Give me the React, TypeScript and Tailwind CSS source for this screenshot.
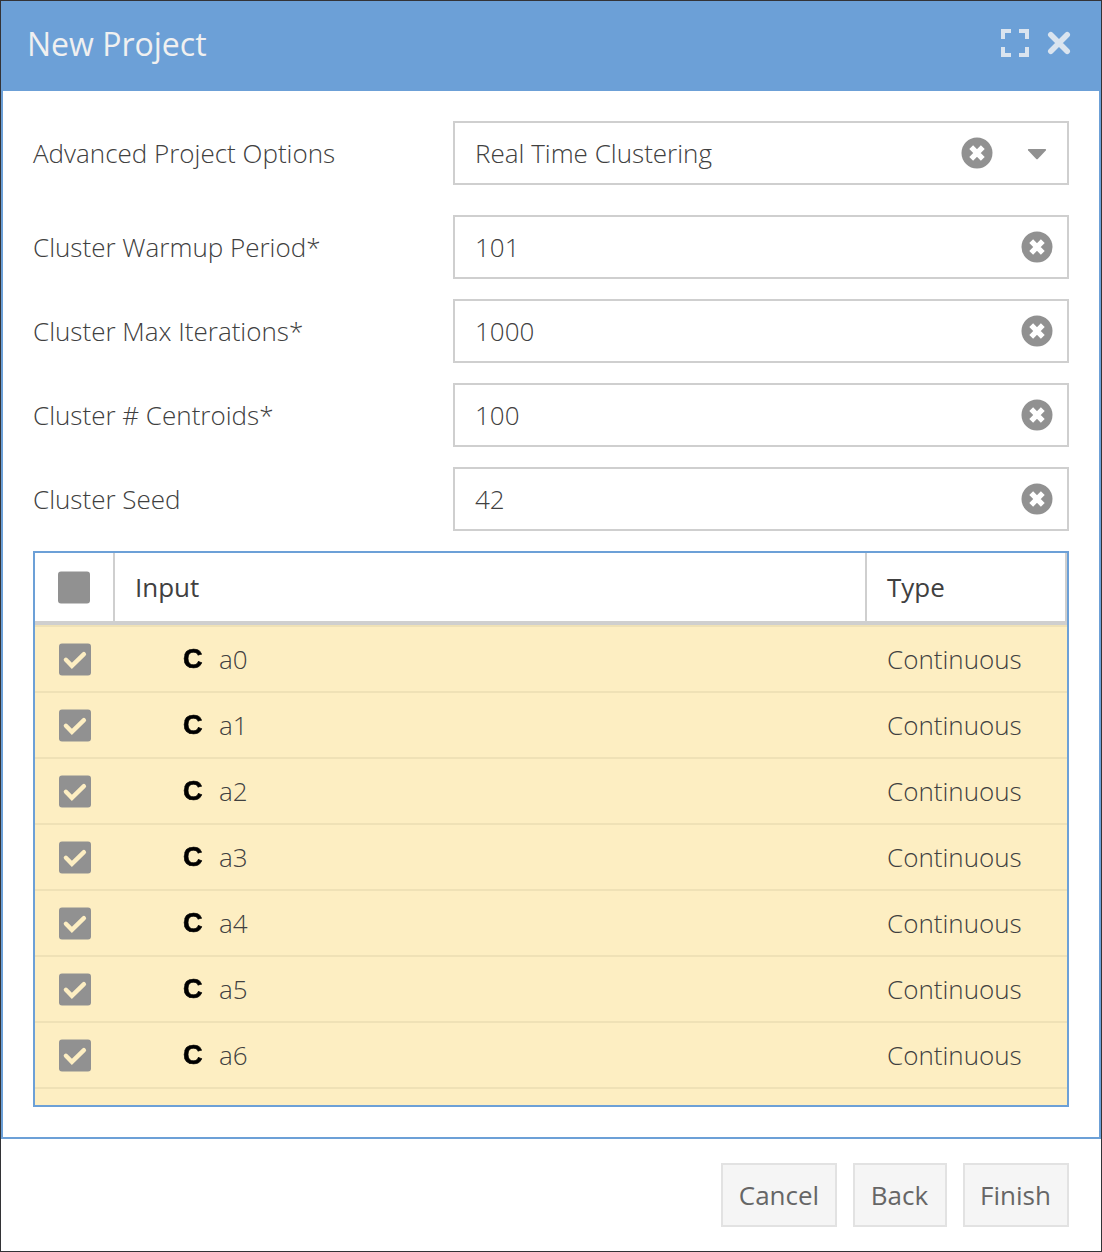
import React from "react";

const fields = [
  { label: "Cluster Warmup Period*", value: "101" },
  { label: "Cluster Max Iterations*", value: "1000" },
  { label: "Cluster # Centroids*", value: "100" },
  { label: "Cluster Seed", value: "42" },
];

const inputs = ["a0", "a1", "a2", "a3", "a4", "a5", "a6"];

function ClearIcon() {
  return (
    <svg width="32" height="32" viewBox="0 0 32 32" className="shrink-0">
      <circle cx="16" cy="16" r="15.5" fill="#919191" />
      <path d="M10.2 10.2 L21.8 21.8 M21.8 10.2 L10.2 21.8" stroke="#fff" strokeWidth="5.4" fill="none" />
    </svg>
  );
}

function Check({ checked }: { checked: boolean }) {
  return (
    <svg width="32" height="33" viewBox="0 0 32 33" className="block">
      <rect x="0" y="0.5" width="32" height="32" rx="3" fill="#919191" />
      {checked && (
        <path d="M6.9 16.8 L12.9 22.8 L24.9 11.2" stroke="#fdeec2" strokeWidth="4.4" strokeLinecap="round" fill="none" strokeLinejoin="miter" />
      )}
    </svg>
  );
}

function Field({ label, value, select = false }: { label: string; value: string; select?: boolean }) {
  return (
    <div className="flex h-16 items-center">
      <label className="w-[420px] font-light">{label}</label>
      <div className="flex h-16 flex-1 items-center border-2 border-[#cfcfcf] pl-5 pr-[14px]">
        <span className="flex-1 font-light">{value}</span>
        <ClearIcon />
        {select && (
          <svg width="20" height="12" viewBox="0 0 20 12" className="ml-[34px] mr-[6px] mt-0.5 shrink-0">
            <path d="M1.5 1 H18.5 Q19.6 1.4 18.8 2.6 L11 10.8 Q10 11.8 9 10.8 L1.2 2.6 Q0.4 1.4 1.5 1 Z" fill="#919191" />
          </svg>
        )}
      </div>
    </div>
  );
}

export default function App() {
  return (
    <div className="flex h-[1252px] w-[1102px] flex-col border border-[#333336] bg-white font-['Open_Sans',sans-serif] text-[26px] leading-9 text-[#404040]">
      <header className="flex h-[90px] shrink-0 items-center justify-between bg-[#6ca0d7] pb-1.5 pl-[26px] pr-[29px]">
        <h1 className="pt-0.5 text-[32px] font-normal text-[#f0f0f0]">New Project</h1>
        <div className="flex items-center gap-[17px]">
          <svg width="28" height="28" viewBox="0 0 28 28">
            <path d="M2 10 V2 H10 M18 2 H26 V10 M26 18 V26 H18 M10 26 H2 V18" stroke="#dae4ef" strokeWidth="4" fill="none" />
          </svg>
          <svg width="26" height="26" viewBox="0 0 26 26">
            <path d="M4.8 4.8 L21.2 21.2 M21.2 4.8 L4.8 21.2" stroke="#dae4ef" strokeWidth="5.6" strokeLinecap="round" fill="none" />
          </svg>
        </div>
      </header>

      <main className="flex h-[1048px] shrink-0 flex-col border-2 border-t-0 border-[#6ca0d7] px-[30px] pt-[30px]">
        <Field label="Advanced Project Options" value="Real Time Clustering" select />
        <div className="mt-[30px] flex flex-col gap-5">
          {fields.map((f) => (
            <Field key={f.label} {...f} />
          ))}
        </div>

        <div className="mt-5 flex h-[556px] shrink-0 flex-col overflow-hidden border-2 border-[#6ca0d7] bg-[#fdeec2]">
          <div className="flex h-[72px] shrink-0 border-b-4 border-[#cfcfcf] bg-white">
            <div className="flex w-20 items-center border-r-2 border-[#cfcfcf] pl-[23px]">
              <Check checked={false} />
            </div>
            <div className="flex w-[752px] items-center border-r-2 border-[#cfcfcf] pl-5">Input</div>
            <div className="flex flex-1 items-center border-r-2 border-[#cfcfcf] pl-5">Type</div>
          </div>
          {inputs.map((name) => (
            <div key={name} className="flex h-[66px] shrink-0 items-center border-t-2 border-[#efe1b6] font-light">
              <div className="w-20 pl-6">
                <Check checked />
              </div>
              <div className="flex w-[752px] items-center pl-[68px]">
                <span className="w-9 font-['Liberation_Sans',sans-serif] text-[27px] font-bold text-black blur-[0.7px] [-webkit-text-stroke:0.7px_black]">C</span>
                <span>{name}</span>
              </div>
              <div className="pl-5">Continuous</div>
            </div>
          ))}
          <div className="h-[66px] shrink-0 border-t-2 border-[#efe1b6]" />
        </div>
      </main>

      <footer className="flex justify-end gap-4 pr-8 pt-6 text-[#666]">
        <button className="h-16 w-[116px] border-2 border-[#e2e2e2] bg-[#f5f5f5]">Cancel</button>
        <button className="h-16 w-[94px] border-2 border-[#e2e2e2] bg-[#f5f5f5] pr-px">Back</button>
        <button className="h-16 w-[106px] border-2 border-[#e2e2e2] bg-[#f5f5f5] pr-px">Finish</button>
      </footer>
    </div>
  );
}
